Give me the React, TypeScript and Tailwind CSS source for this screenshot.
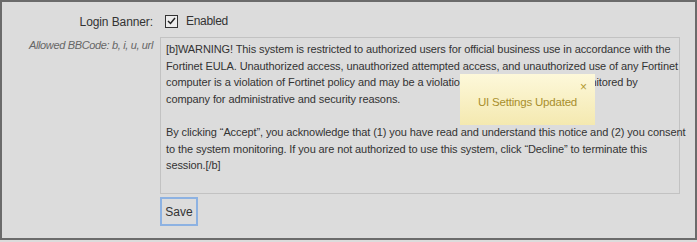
const font = { fontFamily: '"Liberation Sans", Tahoma, Arial, sans-serif' };

const para1 = [
  '[b]WARNING! This system is restricted to authorized users for official business use in accordance with the',
  'Fortinet EULA. Unauthorized access, unauthorized attempted access, and unauthorized use of any Fortinet',
  'computer is a violation of Fortinet policy and may be a violation of law. All use may be monitored by',
  'company for administrative and security reasons.',
];

const para2 = [
  'By clicking “Accept”, you acknowledge that (1) you have read and understand this notice and (2) you consent',
  'to the system monitoring. If you are not authorized to use this system, click “Decline” to terminate this',
  'session.[/b]',
];

export default function App() {
  return (
    <div className="w-[697px] h-[242px] bg-[#dcdcdc]" style={font}>
      <div className="relative w-[697px] h-[240px] border-2 border-[#6b6b6b] bg-[#dcdcdc] pt-[8px]">
        <div className="flex">
          <div className="w-[151px] shrink-0 text-right text-[12px] tracking-[-0.1px] text-[#333] pt-[3px]">Login Banner:</div>
          <div className="ml-[12px] flex items-center gap-[8px] h-[22px]">
            <span className="w-[13px] h-[13px] border border-[#333] bg-[#ececec] flex items-center justify-center">
              <svg width="9" height="8" viewBox="0 0 9 8">
                <path d="M1 4 L3.5 6.5 L8 1" fill="none" stroke="#222" strokeWidth="1.5" />
              </svg>
            </span>
            <span className="text-[12px] tracking-[-0.3px] text-[#333]">Enabled</span>
          </div>
        </div>
        <div className="flex mt-[5px]">
          <div className="w-[151px] shrink-0 text-right text-[11px] italic tracking-[-0.35px] text-[#666]">Allowed BBCode: b, i, u, url</div>
          <div className="ml-[7px]">
            <div className="w-[520px] h-[157px] border border-[#c2c2c2] bg-[#dcdcdc] px-[5px] pt-[3px] text-[11px] leading-[16.6px] tracking-[-0.1px] text-[#333] whitespace-nowrap">
              <p>
                {para1.map((l) => (
                  <span key={l} className="block">{l}</span>
                ))}
              </p>
              <p className="mt-[16.6px]">
                {para2.map((l) => (
                  <span key={l} className="block">{l}</span>
                ))}
              </p>
            </div>
            <button className="mt-[3px] w-[38px] h-[29px] border-2 border-[#8db2e2] bg-[#dcdcdc] text-[12px] text-[#333]">Save</button>
          </div>
        </div>
        <div className="absolute left-[458px] top-[72px] w-[135px] h-[51px] bg-gradient-to-b from-[#fdf8da] to-[#f4e9b0] flex items-center justify-center">
          <span className="absolute right-[8px] top-[4px] text-[12px] text-[#b39a32]">×</span>
          <span className="text-[11.5px] tracking-[-0.2px] text-[#a88e2c] mt-[6px]">UI Settings Updated</span>
        </div>
      </div>
    </div>
  );
}
